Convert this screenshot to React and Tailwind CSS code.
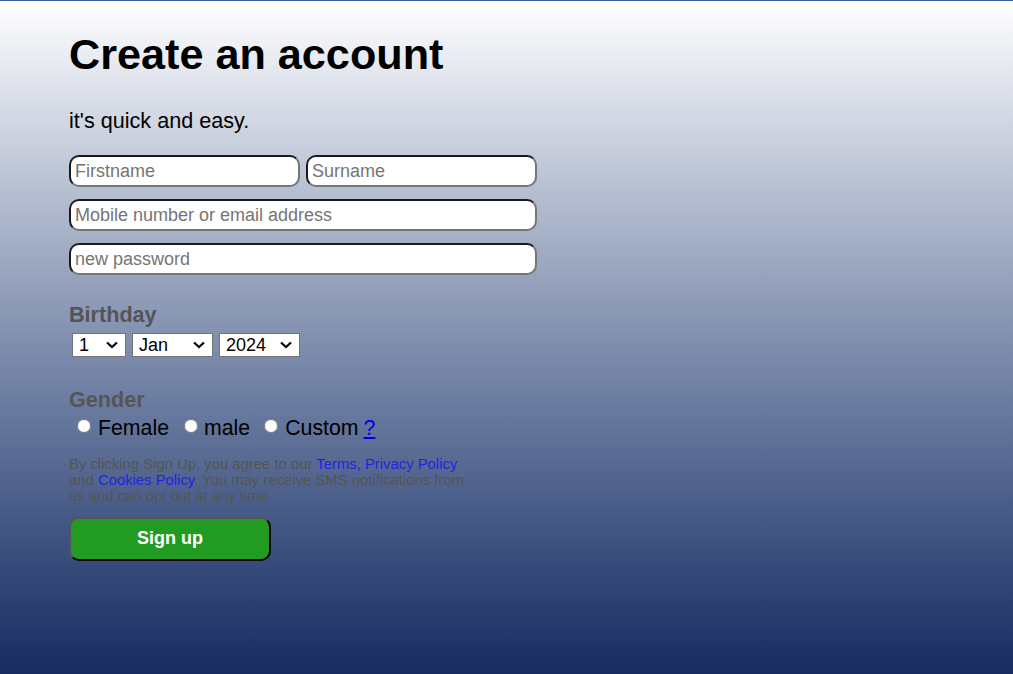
function Chevron() {
  return (
    <svg
      className="pointer-events-none absolute right-[8px] top-[8px]"
      width="12"
      height="8"
      viewBox="0 0 12 8"
      fill="none"
      stroke="black"
      strokeWidth="2.2"
    >
      <path d="M1 1.5 L6 6 L11 1.5" />
    </svg>
  );
}

function Select({ width, options }) {
  return (
    <div className={`relative ${width}`}>
      <select className="h-[24px] w-full appearance-none border border-[#767676] bg-white pl-[6px] text-[18px] leading-[21px] text-black outline-none">
        {options.map((o) => (
          <option key={o}>{o}</option>
        ))}
      </select>
      <Chevron />
    </div>
  );
}

const inputCls =
  "h-[32px] rounded-[10px] border-2 border-t-[#1a1a1a] border-l-[#1a1a1a] border-r-[#767676] border-b-[#767676] bg-white px-[4px] text-[18px] text-black outline-none placeholder:text-[#757575]";

export default function App() {
  return (
    <div className="h-[674px] w-full overflow-hidden border-t border-[#3d5ea8] bg-gradient-to-b from-white to-[#172b61] font-['Liberation_Sans',Arial,sans-serif]">
      <div className="pl-[69px] pt-[28px]">
        <h1 className="text-[43.2px] font-bold leading-[50px] text-black">Create an account</h1>
        <p className="mt-[29px] text-[21.6px] leading-[25px] text-black">it's quick and easy.</p>

        <form className="mt-[22px] flex w-[468px] flex-col gap-[12px]" onSubmit={(e) => e.preventDefault()}>
          <div className="flex gap-[6px]">
            <input type="text" placeholder="Firstname" className={`${inputCls} w-[231px]`} />
            <input type="text" placeholder="Surname" className={`${inputCls} w-[231px]`} />
          </div>
          <input type="text" placeholder="Mobile number or email address" className={`${inputCls} w-[468px]`} />
          <input type="password" placeholder="new password" className={`${inputCls} w-[468px]`} />
        </form>

        <h3 className="mt-[27px] text-[21.6px] font-bold leading-[25px] text-[#555]">Birthday</h3>
        <div className="ml-[3px] mt-[6px] flex gap-[6px]">
          <Select width="w-[54px]" options={["1", "2", "3"]} />
          <Select width="w-[81px]" options={["Jan", "Feb", "Mar"]} />
          <Select width="w-[81px]" options={["2024", "2023", "2022"]} />
        </div>

        <h3 className="mt-[29px] text-[21.6px] font-bold leading-[25px] text-[#555]">Gender</h3>
        <div className="mt-[4px] flex items-center text-[21.3px] leading-[24px] text-black">
          <input type="radio" name="gender" className="ml-[8px] mr-[7px] h-[14px] w-[14px] -translate-y-[2px]" />
          <span>Female</span>
          <input type="radio" name="gender" className="ml-[15px] mr-[6px] h-[14px] w-[14px] -translate-y-[2px]" />
          <span>male</span>
          <input type="radio" name="gender" className="ml-[14px] mr-[7px] h-[14px] w-[14px] -translate-y-[2px]" />
          <span>Custom</span>
          <a href="#" className="ml-[5px] text-[#0000ee] underline">?</a>
        </div>

        <p className="mt-[16px] w-[400px] text-[14.85px] leading-[16px] text-[#555]">
          By clicking Sign Up, you agree to our <a href="#" className="text-[#2424e0]">Terms, Privacy Policy</a> and{" "}
          <a href="#" className="text-[#2424e0]">Cookies Policy</a>. You may receive SMS notifications from us and can opt out at any time
        </p>

        <button
          type="button"
          className="mt-[13px] h-[44px] w-[202px] rounded-[10px] border-2 border-t-[#555] border-l-[#555] border-r-black border-b-black bg-[#229b23] text-[18px] font-bold text-white"
        >
          Sign up
        </button>
      </div>
    </div>
  );
}
